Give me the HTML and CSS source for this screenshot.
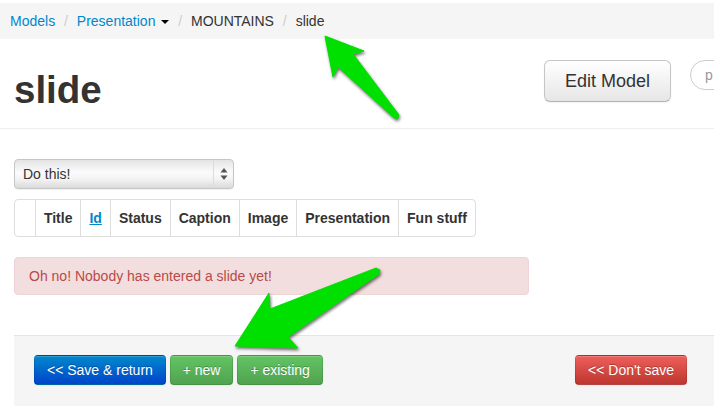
FILE: index.html
```html
<!DOCTYPE html>
<html>
<head>
<meta charset="utf-8">
<title>slide</title>
<link rel="stylesheet" href="styles.css">
</head>
<body>
<ul class="breadcrumb">
  <li><a href="#">Models</a> <span class="divider">/</span></li>
  <li><a href="#">Presentation <b class="caret"></b></a> <span class="divider">/</span></li>
  <li>MOUNTAINS <span class="divider">/</span></li>
  <li class="active">slide</li>
</ul>

<div class="page-header">
  <h1>slide</h1>
  <a class="btn btn-large" href="#">Edit Model</a>
  <div class="search"><span class="search-box">p</span></div>
</div>

<div class="content">
  <div class="select-wrap">
    <select class="action-select"><option>Do this!</option></select>
    <span class="select-arrows">
      <svg width="8" height="12" viewBox="0 0 8 12"><path d="M4 0 L7.5 4.5 L0.5 4.5 Z M4 12 L7.5 7.5 L0.5 7.5 Z" fill="#555"/></svg>
    </span>
  </div>

  <table class="grid">
    <thead>
      <tr>
        <th>&nbsp;</th>
        <th>Title</th>
        <th><a href="#">Id</a></th>
        <th>Status</th>
        <th>Caption</th>
        <th>Image</th>
        <th>Presentation</th>
        <th>Fun stuff</th>
      </tr>
    </thead>
  </table>

  <div class="alert">Oh no! Nobody has entered a slide yet!</div>
</div>

<div class="form-actions">
  <div class="actions-left">
    <a class="btn btn-primary" href="#">&lt;&lt; Save &amp; return</a>
    <a class="btn btn-success" href="#">+ new</a>
    <a class="btn btn-success" href="#">+ existing</a>
  </div>
  <a class="btn btn-danger" href="#">&lt;&lt; Don't save</a>
</div>

<svg class="arrows" width="714" height="406" viewBox="0 0 714 406">
  <polygon points="325,36 364,51 353,54 399,115 397,119 393,117 338,67 333,77" />
  <polygon points="235,346 269,293 270,309 376,268 380,270 379,274 288,337 298,348" />
</svg>
</body>
</html>
```

FILE: styles.css
```css
html, body {
  overflow: hidden;
}
body {
  margin: 0;
  font-family: "Liberation Sans", Arial, Helvetica, sans-serif;
  font-size: 14px;
  line-height: 20px;
  color: #333;
  background: #fff;
  position: relative;
  min-height: 406px;
}
a {
  color: #0088cc;
  text-decoration: none;
}

/* breadcrumb */
.breadcrumb {
  list-style: none;
  margin: 3px 0 0;
  padding: 8px 10px;
  background: #f5f5f5;
}
.breadcrumb li {
  display: inline-block;
}
.breadcrumb .divider {
  padding: 0 5px;
  color: #ccc;
}
.caret {
  display: inline-block;
  width: 0;
  height: 0;
  margin-left: 2px;
  vertical-align: middle;
  border-top: 4px solid #000;
  border-left: 4px solid transparent;
  border-right: 4px solid transparent;
}

/* header */
.page-header {
  display: flex;
  align-items: flex-start;
  padding: 21px 0 18px 14px;
  border-bottom: 1px solid #eee;
}
.page-header h1 {
  flex: 1;
  margin: 10px 0 0;
  font-size: 38.5px;
  line-height: 40px;
  font-weight: bold;
  color: #333;
}
.btn {
  display: inline-block;
  padding: 4px 12px;
  font-size: 14px;
  line-height: 20px;
  border: 1px solid #c5c5c5;
  border-bottom-color: #b3b3b3;
  border-radius: 4px;
  color: #333;
  background: linear-gradient(#ffffff, #e6e6e6);
  box-shadow: inset 0 1px 0 rgba(255,255,255,.2), 0 1px 2px rgba(0,0,0,.05);
  white-space: nowrap;
}
.btn-large {
  padding: 10px 20px;
  font-size: 18px;
  border-radius: 6px;
}
.search {
  width: 24px;
  margin-left: 19px;
  overflow: hidden;
}
.search-box {
  display: block;
  width: 150px;
  padding: 4px 14px;
  border: 1px solid #ccc;
  border-radius: 15px;
  color: #999;
  background: #fff;
}

/* content */
.content {
  padding: 0 14px;
}
.select-wrap {
  position: relative;
  width: 220px;
  height: 30px;
  margin-top: 30px;
}
.action-select {
  -webkit-appearance: none;
  appearance: none;
  display: block;
  box-sizing: border-box;
  width: 220px;
  height: 30px;
  margin: 0;
  padding: 0 24px 0 8px;
  font-family: "Liberation Sans", Arial, sans-serif;
  font-size: 14px;
  color: #333;
  border: 1px solid #c6c6c6;
  border-radius: 4px;
  background: linear-gradient(#e4e4e4, #fbfbfb 45%, #f2f2f2 70%, #dadada);
  box-shadow: 0 1px 1px rgba(0,0,0,.06);
}
.select-arrows {
  position: absolute;
  top: 1px;
  right: 1px;
  bottom: 1px;
  width: 19px;
  border-left: 1px solid #dcdcdc;
  display: flex;
  align-items: center;
  justify-content: center;
}

.grid {
  margin-top: 10px;
  border-collapse: separate;
  border-spacing: 0;
  border: 1px solid #ddd;
  border-radius: 4px;
}
.grid th {
  padding: 8px;
  line-height: 20px;
  text-align: left;
  font-weight: bold;
  border-left: 1px solid #ddd;
}
.grid th:first-child {
  border-left: 0;
}
.grid th a {
  text-decoration: underline;
}

.alert {
  box-sizing: border-box;
  width: 515px;
  margin-top: 20px;
  padding: 8px 35px 8px 14px;
  background: #f2dede;
  border: 1px solid #eed3d7;
  border-radius: 4px;
  color: #b94a48;
}

/* footer */
.form-actions {
  display: flex;
  justify-content: space-between;
  align-items: flex-start;
  margin: 40px 0 0 14px;
  padding: 19px 27px 40px 20px;
  background: #f5f5f5;
  border-top: 1px solid #e5e5e5;
}
.btn-primary,
.btn-success,
.btn-danger {
  color: #fff;
  text-shadow: 0 -1px 0 rgba(0,0,0,.25);
  border-color: rgba(0,0,0,.1) rgba(0,0,0,.1) rgba(0,0,0,.25);
}
.btn-primary {
  background: linear-gradient(#0088cc, #0044cc);
}
.btn-success {
  background: linear-gradient(#62c462, #51a351);
}
.btn-danger {
  background: linear-gradient(#ee5f5b, #bd362f);
}

/* annotation arrows */
.arrows {
  position: absolute;
  left: 0;
  top: 0;
  pointer-events: none;
}
.arrows polygon {
  fill: #00e000;
  stroke: #00e000;
  stroke-width: 1;
  stroke-linejoin: round;
  filter: drop-shadow(1px 2px 1.5px rgba(0,0,0,.55));
}
```
